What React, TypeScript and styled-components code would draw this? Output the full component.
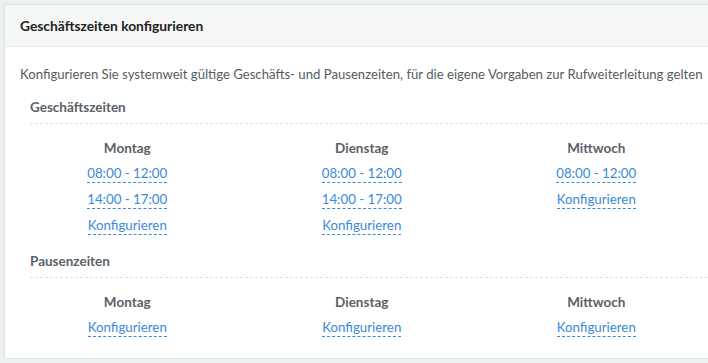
import React from 'react'
import styled, { createGlobalStyle } from 'styled-components'

const GlobalStyle = createGlobalStyle`
  html, body {
    margin: 0;
    padding: 0;
    background: #eef1f2;
    font-family: Lato, 'Noto Sans', sans-serif;
    overflow: hidden;
  }
`

const Page = styled.div`
  padding: 4px 0 0 4px;
  width: 760px;
`

const Card = styled.section`
  background: #fff;
  border: 1px solid #e1e6e8;
  box-shadow: 0 1px 2px rgba(0, 0, 0, 0.08);
`

const CardHeader = styled.header`
  background: #f5f6f6;
  border-bottom: 1px solid #e3e7e9;
  height: 41px;
  display: flex;
  align-items: center;
  padding: 0 15px;
  font-size: 13.8px;
  font-weight: 700;
  color: #222;
`

const CardBody = styled.div`
  padding: 19px 15px 21px 15px;
`

const Intro = styled.p`
  margin: 0 0 17px 0;
  font-size: 13.15px;
  color: #555c61;
  white-space: nowrap;
`

const SectionTitle = styled.h4`
  margin: 0 0 0 10px;
  padding-bottom: 8px;
  border-bottom: 1px dashed #dfe3e5;
  font-size: 13.5px;
  font-weight: 700;
  color: #5a6166;
`

const Days = styled.div`
  display: grid;
  grid-template-columns: repeat(3, 234.5px);
  margin: 16px 0 0 -10px;
`

const Day = styled.div<{ $last?: boolean }>`
  display: flex;
  flex-direction: column;
  align-items: center;
  gap: 8px;
  margin-bottom: ${p => (p.$last ? '0' : '18px')};
`

const DayName = styled.div`
  font-size: 13.5px;
  font-weight: 700;
  color: #5a6166;
  margin-bottom: 1px;
`

const DashLink = styled.a`
  font-size: 13.3px;
  color: #3a8ad6;
  text-decoration: none;
  border-bottom: 1px dashed #3a8ad6;
  line-height: 17px;
  cursor: pointer;
`

type DayData = { name: string; slots: string[] }

const business: DayData[] = [
  { name: 'Montag', slots: ['08:00 - 12:00', '14:00 - 17:00'] },
  { name: 'Dienstag', slots: ['08:00 - 12:00', '14:00 - 17:00'] },
  { name: 'Mittwoch', slots: ['08:00 - 12:00'] },
]

const breaks: DayData[] = [
  { name: 'Montag', slots: [] },
  { name: 'Dienstag', slots: [] },
  { name: 'Mittwoch', slots: [] },
]

const DayGrid: React.FC<{ days: DayData[]; last?: boolean }> = ({ days, last }) => (
  <Days>
    {days.map(d => (
      <Day key={d.name} $last={last}>
        <DayName>{d.name}</DayName>
        {d.slots.map(s => (
          <DashLink key={s}>{s}</DashLink>
        ))}
        <DashLink>Konfigurieren</DashLink>
      </Day>
    ))}
  </Days>
)

export default function App() {
  return (
    <Page>
      <GlobalStyle />
      <Card>
        <CardHeader>Geschäftszeiten konfigurieren</CardHeader>
        <CardBody>
          <Intro>
            Konfigurieren Sie systemweit gültige Geschäfts- und Pausenzeiten, für die eigene Vorgaben zur Rufweiterleitung gelten
          </Intro>
          <SectionTitle>Geschäftszeiten</SectionTitle>
          <DayGrid days={business} />
          <SectionTitle>Pausenzeiten</SectionTitle>
          <DayGrid days={breaks} last />
        </CardBody>
      </Card>
    </Page>
  )
}
